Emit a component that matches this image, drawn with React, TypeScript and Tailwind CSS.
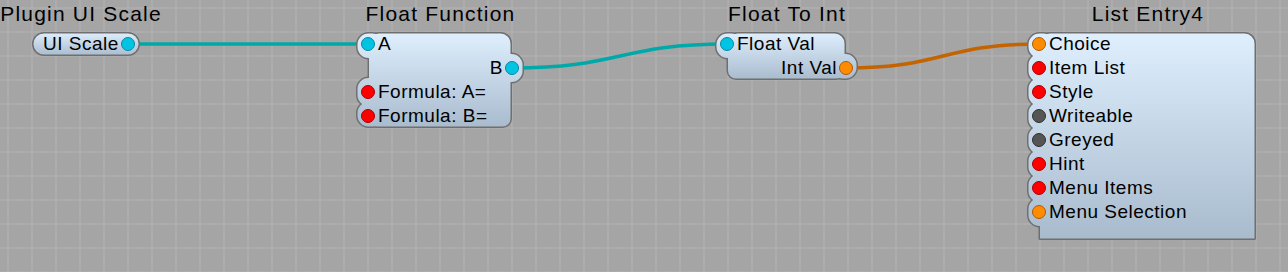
import { useId } from "react"

type PortColor = "cyan" | "red" | "gray" | "orange"

type Row = {
  label: string
  side: "left" | "right"
  color: PortColor
}

type NodeSpec = {
  title: string
  pos: string
  bodyW: number
  rows: Row[]
  extra?: number
  br?: number
  bl?: number
  pill?: boolean
  titleClass?: string
}

const ROW = 24
const OUT_L = 13
const OUT_R = 12

const portColors: Record<PortColor, string> = {
  cyan: "bg-[#00c4e4] border-[#0b879f]",
  red: "bg-[#ff0000] border-[#a80000]",
  gray: "bg-[#555555] border-[#303030]",
  orange: "bg-[#ff8c00] border-[#b05a00]",
}

const nodes: NodeSpec[] = [
  {
    title: "Plugin UI Scale",
    pos: "left-[32px]",
    bodyW: 108,
    pill: true,
    titleClass: "-translate-x-[5px]",
    rows: [{ label: "UI Scale", side: "right", color: "cyan" }],
  },
  {
    title: "Float Function",
    pos: "left-[356px]",
    bodyW: 143,
    br: 8,
    rows: [
      { label: "A", side: "left", color: "cyan" },
      { label: "B", side: "right", color: "cyan" },
      { label: "Formula: A=", side: "left", color: "red" },
      { label: "Formula: B=", side: "left", color: "red" },
    ],
  },
  {
    title: "Float To Int",
    pos: "left-[715px]",
    bodyW: 118,
    br: 8,
    rows: [
      { label: "Float Val", side: "left", color: "cyan" },
      { label: "Int Val", side: "right", color: "orange" },
    ],
  },
  {
    title: "List Entry4",
    pos: "left-[1027px]",
    bodyW: 216,
    extra: 16,
    br: 0,
    bl: 0,
    rows: [
      { label: "Choice", side: "left", color: "orange" },
      { label: "Item List", side: "left", color: "red" },
      { label: "Style", side: "left", color: "red" },
      { label: "Writeable", side: "left", color: "gray" },
      { label: "Greyed", side: "left", color: "gray" },
      { label: "Hint", side: "left", color: "red" },
      { label: "Menu Items", side: "left", color: "red" },
      { label: "Menu Selection", side: "left", color: "orange" },
    ],
  },
]

function roundRect(x: number, y: number, w: number, h: number, tl: number, tr: number, br: number, bl: number) {
  return `M${x + tl} ${y} H${x + w - tr} A${tr} ${tr} 0 0 1 ${x + w} ${y + tr} V${y + h - br} A${br} ${br} 0 0 1 ${x + w - br} ${y + h} H${x + bl} A${bl} ${bl} 0 0 1 ${x} ${y + h - bl} V${y + tl} A${tl} ${tl} 0 0 1 ${x + tl} ${y} Z`
}

function shapesFor(n: NodeSpec, W: number, H: number) {
  const e = 1.5
  if (n.pill) return [roundRect(e, e, W - 2 * e, H - 2 * e, 10.5, 10.5, 10.5, 10.5)]
  const br = n.br ?? 8
  const bl = n.bl ?? 8
  const out = [roundRect(OUT_L, e, n.bodyW - e, H - 2 * e, 10, 10, br, bl)]
  const last = n.rows.length - 1
  n.rows.forEach((r, i) => {
    const y1 = i === 0 ? e : i * ROW - 2
    const y2 = i === last && !n.extra ? H - e : i * ROW + ROW + 2
    if (r.side === "left") {
      out.push(roundRect(e, y1, OUT_L + 14 - e, y2 - y1, 11, 11, 11, 11))
    } else {
      const x1 = OUT_L + n.bodyW - 14
      out.push(roundRect(x1, y1, W - e - x1, y2 - y1, 11, 11, 11, 11))
    }
  })
  return out
}

function Port({ color }: { color: PortColor }) {
  return <div className={`h-[14px] w-[14px] shrink-0 rounded-full border ${portColors[color]}`} />
}

function GraphNode({ node }: { node: NodeSpec }) {
  const gid = useId().replace(/:/g, "")
  const W = node.pill ? node.bodyW : OUT_L + node.bodyW + OUT_R
  const H = node.rows.length * ROW + (node.extra ?? 0)
  const shapes = shapesFor(node, W, H)

  return (
    <div className={`absolute top-[2px] ${node.pos}`} style={{ width: W }}>
      <div
        className={`flex h-6 justify-center whitespace-nowrap text-[21px] leading-6 tracking-[1.2px] text-black ${
          node.pill ? "" : "pl-[13px] pr-[12px]"
        } ${node.titleClass ?? ""}`}
      >
        {node.title}
      </div>
      <div className="relative mt-[6px]" style={{ height: H }}>
        <svg className="absolute left-0 top-0 overflow-visible" width={W} height={H}>
          <defs>
            <linearGradient id={gid} x1="0" y1="0" x2="0" y2={H} gradientUnits="userSpaceOnUse">
              <stop offset="0" stopColor="#dfeffe" />
              <stop offset="1" stopColor="#a8bbcd" />
            </linearGradient>
          </defs>
          <g fill="#6f6f6f" stroke="#6f6f6f" strokeWidth="3" strokeLinejoin="round">
            {shapes.map((d, i) => (
              <path key={i} d={d} />
            ))}
          </g>
          <g fill={`url(#${gid})`}>
            {shapes.map((d, i) => (
              <path key={i} d={d} />
            ))}
          </g>
        </svg>
        <div className="relative flex flex-col">
          {node.rows.map((r) =>
            r.side === "left" ? (
              <div key={r.label} className="flex h-6 items-center pl-[5px]">
                <Port color={r.color} />
                <span className="ml-[3px] whitespace-nowrap text-[19px] leading-6 tracking-[0.5px]">{r.label}</span>
              </div>
            ) : (
              <div
                key={r.label}
                className={`flex h-6 items-center pr-[5px] ${node.pill ? "pl-[11px]" : "justify-end"}`}
              >
                <span className="mr-[2px] whitespace-nowrap text-[19px] leading-6 tracking-[0.5px]">{r.label}</span>
                <Port color={r.color} />
              </div>
            )
          )}
        </div>
      </div>
    </div>
  )
}

export default function App() {
  return (
    <div
      className="relative h-[272px] w-[1288px] overflow-hidden bg-[#a5a5a5] bg-[linear-gradient(to_right,#adadad_2px,transparent_2px),linear-gradient(to_bottom,#adadad_2px,transparent_2px)] bg-size-[24px_24px] bg-position-[7px_7px] text-black"
      style={{ fontFamily: '"Liberation Sans", Arial, sans-serif' }}
    >
      <svg className="absolute inset-0" width="1288" height="272">
        <g fill="none" strokeWidth="3.5" strokeLinecap="round">
          <path d="M128 44 H368" stroke="#00a9a9" />
          <path d="M512 68 C620 68 620 44 727 44" stroke="#00a9a9" />
          <path d="M846 68 C943 68 943 44 1039 44" stroke="#c46400" />
        </g>
      </svg>
      {nodes.map((n) => (
        <GraphNode key={n.title} node={n} />
      ))}
    </div>
  )
}
